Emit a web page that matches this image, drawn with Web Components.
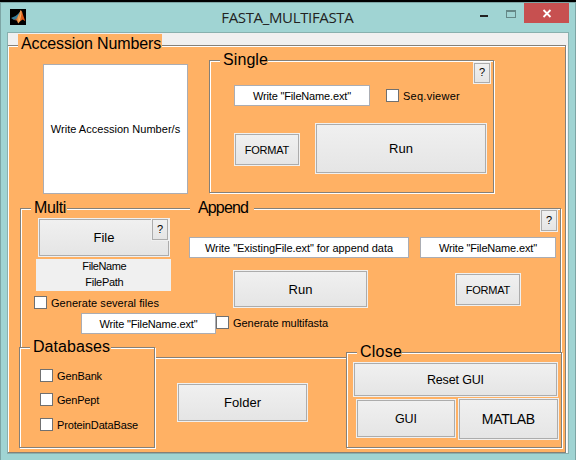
<!DOCTYPE html>
<html lang="en">
<head>
<meta charset="utf-8">
<title>FASTA_MULTIFASTA</title>
<style>
html,body{margin:0;height:460px;overflow:hidden;background:#000}
body{font:11px "Liberation Sans",Arial,sans-serif;color:#000}
.row{display:flex;align-items:flex-start}
.col{display:flex;flex-direction:column;align-items:flex-start;flex:none}
</style>
</head>
<body>
<app-window caption="FASTA_MULTIFASTA" w="131">
  <group-panel style="--w:559px;--h:408px;margin-left:-1px;clip-path:inset(-12px -2px 0 1px)">
    <group-title slot="title" label="Accession Numbers" w="139" style="left:11px;top:-11px;width:144px;height:22px;--pad:3px"></group-title>
    <div class="row" style="height:134px;padding-top:15px">
      <edit-box label="Write Accession Number/s" w="129" style="--w:145px;--h:130px;--dy:0px;margin:4px 21px 0 36px"></edit-box>
      <group-panel style="--w:285px;--h:133px">
        <group-title slot="title" label="Single" w="44" style="left:11px;top:-10px;width:48px;--pad:3px"></group-title>
        <push-button slot="title" label="?" style="--w:18px;--h:22px;position:absolute;left:264px;top:2px"></push-button>
        <div class="row" style="margin:25px 0 0 25px">
          <edit-box label='Write "FileName.ext"' w="97" style="--w:136px;--h:21px"></edit-box>
          <check-box label="Seq.viewer" w="56" style="margin:4px 0 0 16px"></check-box>
        </div>
        <div class="row" style="margin:17px 0 0 25px">
          <push-button label="FORMAT" w="43" style="--w:66px;--h:33px;--dy:1px;margin-top:10px"></push-button>
          <push-button label="Run" w="23" style="--w:172px;--h:51px;--fs:13px;margin-left:15px"></push-button>
        </div>
      </group-panel>
    </div>
    <group-panel style="--w:541px;--h:150px;margin:14px 0 0 13px">
      <group-title slot="title" label="Multi" w="31" style="left:11px;top:-10px;width:36px;--pad:3px"></group-title>
      <group-title slot="title" label="Append" w="49" style="left:170px;top:-10px;width:64px;--pad:8px"></group-title>
      <push-button slot="title" label="?" style="--w:18px;--h:23px;position:absolute;left:131px;top:10px;z-index:1"></push-button>
      <push-button slot="title" label="?" style="--w:18px;--h:23px;position:absolute;left:520px;top:1px"></push-button>
      <div class="row" style="padding:10px 0 0 14px">
        <div class="col" style="width:155px">
          <push-button label="File" w="20" style="--w:132px;--h:39px;--fs:13px;margin-left:4px"></push-button>
          <file-label style="margin:2px 0 5px 2px"></file-label>
          <check-box label="Generate several files" w="107"></check-box>
        </div>
        <div class="col" style="padding-top:19px;width:231px">
          <edit-box label='Write "ExistingFile.ext" for append data' w="187" style="--w:220px;--h:21px"></edit-box>
          <push-button label="Run" w="23" style="--w:135px;--h:38px;--fs:13px;--dy:1px;margin:12px 0 0 44px"></push-button>
        </div>
        <div class="col" style="padding-top:19px">
          <edit-box label='Write "FileName.ext"' w="97" style="--w:136px;--h:21px"></edit-box>
          <push-button label="FORMAT" w="43" style="--w:66px;--h:33px;--dy:1px;margin:15px 0 0 35px"></push-button>
        </div>
      </div>
      <div class="row" style="margin:4px 0 0 61px">
        <edit-box label='Write "FileName.ext"' w="97" style="--w:135px;--h:21px"></edit-box>
        <check-box label="Generate multifasta" w="94" style="margin-top:3px"></check-box>
      </div>
    </group-panel>
    <div class="row" style="margin:-11px 0 0 12px">
      <group-panel style="--w:136px;--h:101px">
        <group-title slot="title" label="Databases" w="76" style="left:11px;top:-10px;width:81px;--pad:3px"></group-title>
        <div class="col" style="padding:22px 0 0 21px">
          <check-box label="GenBank" w="44"></check-box>
          <check-box label="GenPept" w="41" style="margin-top:11px"></check-box>
          <check-box label="ProteinDataBase" w="80" style="margin-top:12px"></check-box>
        </div>
      </group-panel>
      <push-button label="Folder" w="36" style="--w:131px;--h:39px;--fs:13px;margin:36px 38px 0 22px"></push-button>
      <group-panel style="--w:216px;--h:96px;margin-top:5px">
        <group-title slot="title" label="Close" w="41" style="left:11px;top:-10px;width:45px;--pad:3px"></group-title>
        <div class="col" style="padding:10px 0 0 7px">
          <push-button label="Reset GUI" w="56" style="--w:205px;--h:35px;--fs:12.5px;--dy:1px"></push-button>
          <div class="row" style="margin:1px 0 0 3px">
            <push-button label="GUI" w="21" style="--w:100px;--h:39px;--fs:12.5px;--dy:1px;margin-top:1px"></push-button>
            <push-button label="MATLAB" w="52" style="--w:101px;--h:42px;--fs:14px;margin-left:2px"></push-button>
          </div>
        </div>
      </group-panel>
    </div>
  </group-panel>
</app-window>
<script>
const ctx = document.createElement('canvas').getContext('2d');

// Single-line text whose tracking is adjusted so the line fills the width in "w".
class FitText extends HTMLElement {
  connectedCallback() {
    const t = this.getAttribute('text');
    if (this.shadowRoot || !t) return;
    const root = this.attachShadow({mode: 'open'});
    root.innerHTML = '<style>:host{display:inline-block;white-space:nowrap}span{display:inline-block}</style><span></span>';
    const s = root.querySelector('span');
    s.textContent = t;
    const w = parseFloat(this.getAttribute('w'));
    if (w) {
      const cs = getComputedStyle(this);
      ctx.font = cs.fontSize + ' ' + cs.fontFamily;
      const ls = (w + 1 - ctx.measureText(t).width) / t.length;
      s.style.letterSpacing = ls + 'px';
      s.style.marginRight = -ls + 'px';
    }
  }
}
customElements.define('fit-text', FitText);

function define(name, css, html) {
  customElements.define(name, class extends HTMLElement {
    connectedCallback() {
      if (this.shadowRoot) return;
      this.attachShadow({mode: 'open'}).innerHTML = `<style>${css}</style>${html}`;
      const f = this.shadowRoot.querySelector('fit-text[fill]');
      if (f) {
        const n = document.createElement('fit-text');
        n.setAttribute('text', this.getAttribute('label') || this.getAttribute('caption'));
        if (this.hasAttribute('w')) n.setAttribute('w', this.getAttribute('w'));
        f.replaceWith(n);
      }
    }
  });
}

define('group-panel', `
  :host{display:block;flex:none;box-sizing:border-box;position:relative;width:var(--w);height:var(--h);
    background:#ffb164;box-shadow:inset 0 0 0 1px #858078,inset 2px 2px 0 #fff,1px 1px 0 #fff}
  .content{display:flow-root;position:relative}`,
  '<div class="content"><slot></slot></div><slot name="title"></slot>');

define('group-title', `
  :host{display:block;position:absolute;box-sizing:border-box;height:20px;padding-left:var(--pad);
    background:#ffb164;font-size:16px;line-height:20px}`,
  '<fit-text fill></fit-text>');

define('edit-box', `
  :host{display:flex;flex:none;box-sizing:border-box;width:var(--w);height:var(--h);align-items:center;
    justify-content:center;background:#fff;border:1px solid #abadb3;line-height:13px}
  fit-text{margin-top:calc(var(--dy,1px)*2)}`,
  '<fit-text fill></fit-text>');

define('push-button', `
  :host{display:flex;flex:none;box-sizing:border-box;width:var(--w);height:var(--h);border:1px solid #f0f0f0}
  .face{flex:1;display:flex;align-items:center;justify-content:center;border:1px solid #acacac;
    background:linear-gradient(#f0f0f0,#e5e5e5);font-size:var(--fs,11px);line-height:1.2}
  fit-text{margin-top:calc(var(--dy,0px)*2)}`,
  '<div class="face"><fit-text fill></fit-text></div>');

define('check-box', `
  :host{display:flex;flex:none;align-items:center;gap:4px;height:13px;line-height:13px}
  i{box-sizing:border-box;width:13px;height:13px;border:1px solid #707070;background:#fff}
  fit-text{margin-top:2px}`,
  '<i></i><fit-text fill></fit-text>');

define('file-label', `
  :host{display:grid;width:135px;height:32px;grid-template-rows:16px 16px;justify-items:center;
    background:#f0f0f0;line-height:15px;padding-left:2px;box-sizing:border-box}`,
  '<fit-text text="FileName" w="43"></fit-text><fit-text text="FilePath" w="37"></fit-text>');

define('app-window', `
  :host{display:block;box-sizing:border-box;width:576px;height:458px;margin-top:2px;background:#a0d4d3;
    border:1px solid #7da5a5;border-bottom:0}
  header{display:flex;height:29px;align-items:flex-start}
  .logo{margin:6px 0 0 9px;width:16px;height:16px;flex:none}
  .cap{flex:1;text-align:center;font:15px/29px "Open Sans","Noto Sans",sans-serif;color:#222;padding-left:69px}
  .controls{display:flex;align-items:flex-start;margin-right:6px}
  .min{width:8px;height:2px;background:#222;margin:12px 18px 0 0}
  .max{box-sizing:border-box;width:10px;height:8px;border:1px solid #658887;border-top-width:2px;margin:7px 8px 0 0}
  .close{width:45px;height:20px;background:#c75050}
  .close svg{display:block}
  main{box-sizing:border-box;width:562px;height:422px;margin-left:6px;padding-top:12px;background:#f0f0f0;
    border:1px solid #88b0ae}`,
  `<header>
    <svg class="logo" viewBox="0 0 16 16">
      <defs><linearGradient id="g" x1="0" x2="1"><stop offset="0" stop-color="#8c2418"/><stop offset=".4" stop-color="#f0a050"/><stop offset=".65" stop-color="#e06018"/><stop offset="1" stop-color="#d84a10"/></linearGradient></defs>
      <rect width="16" height="16"/>
      <path d="M1 9 5.5 7 8 5 10.5 2 9.5 7 6.5 10.5 4 11Z" fill="#3a7f9c"/>
      <path d="M4 11 6.5 9.8 9 5 10.7 1.2 12 2.5 13.4 7 15.3 12.3 12.7 10.5 10.5 12 8.2 14.5 6.8 11.5Z" fill="url(#g)"/>
      <path d="M10.7 1.5 11 5 9.2 12" fill="none" stroke="#ffc878" stroke-width=".8"/>
    </svg>
    <div class="cap"><fit-text fill></fit-text></div>
    <div class="controls"><div class="min"></div><div class="max"></div>
      <div class="close"><svg width="45" height="20"><path d="M19.5 7 26.5 14M26.5 7 19.5 14" stroke="#fff" stroke-width="1.8"/></svg></div></div>
  </header><main><slot></slot></main>`);
</script>
</body>
</html>
